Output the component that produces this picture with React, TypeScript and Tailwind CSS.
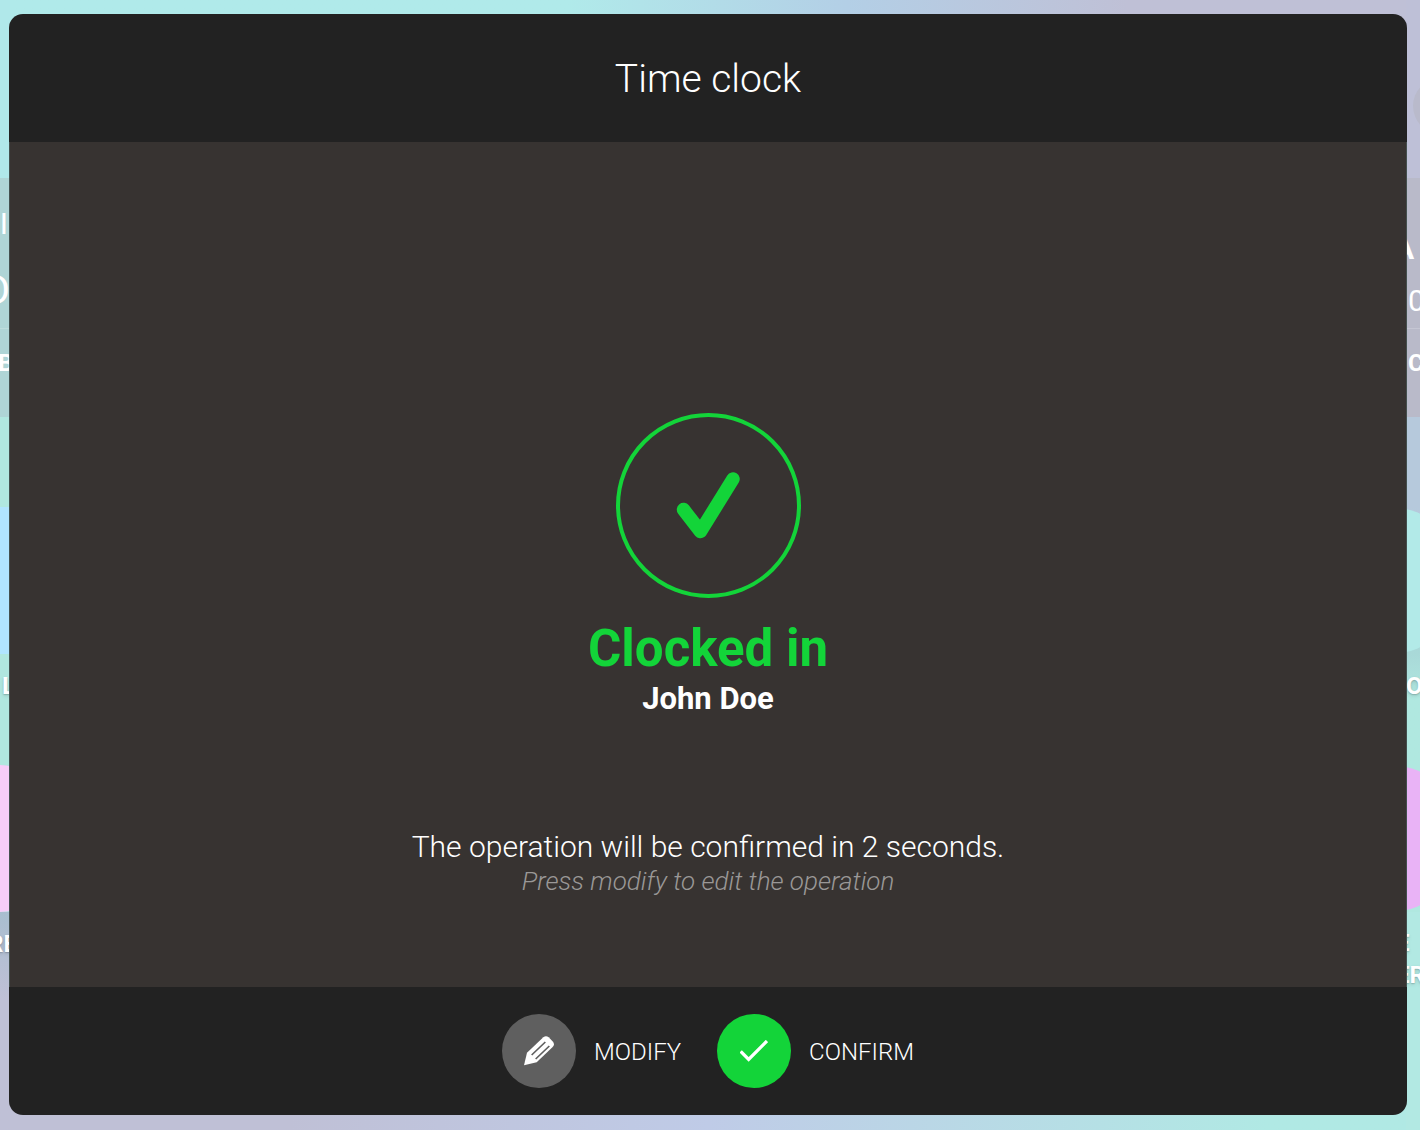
const PencilIcon = () => (
  <svg viewBox="0 0 90 90" className="w-[30px] h-[30px]" fill="none" aria-hidden="true">
    <path
      d="M0 88 L9 50 L58 4 Q66 -3 74 4 L87 17 Q93 25 86 33 L38 79 Z"
      fill="#fff"
    />
    <path d="M23 57 L64 18 M35 69 L76 30" stroke="#5f5f5f" strokeWidth="5" />
  </svg>
);

const CheckIcon = () => (
  <svg viewBox="0 0 84 66" className="w-[28px] h-[22px]" fill="none" aria-hidden="true">
    <path d="M2 34 L26 58 L81 3" stroke="#fff" strokeWidth="10" />
  </svg>
);

const SuccessMark = () => (
  <div className="w-[185px] h-[185px] rounded-full border-4 border-[#13d439] flex items-center justify-center">
    <svg viewBox="0 0 64 68" className="w-[64px] h-[68px]" fill="none" aria-hidden="true">
      <path
        d="M7.5 37.5 L24.5 59.5 L57 7"
        stroke="#13d439"
        strokeWidth="13.5"
        strokeLinecap="round"
        strokeLinejoin="round"
      />
    </svg>
  </div>
);

const Backdrop = () => (
  <div className="absolute inset-0 flex justify-between overflow-hidden text-white" aria-hidden="true">
    <div className="w-[10px] shrink-0 flex flex-col bg-[#b0e8ea]">
      <div className="h-[178px]" />
      <div className="h-[239px] bg-[#afd5d6] flex flex-col items-end">
        <span className="mt-[26px] pr-[2px] text-[30px] leading-[40px]">I</span>
        <span className="mt-[25px] text-[40px] leading-[44px]">D</span>
        <span className="mt-[15px] w-full border-t border-[#bcdcdc]" />
        <span className="mt-[20px] -ml-[2px] text-[24px] leading-[28px] font-bold self-start">B</span>
      </div>
      <div className="h-[90px] bg-[#b0e8e0]" />
      <div className="h-[147px] bg-[#b0e5ff]" />
      <div className="h-[111px] bg-[#b0e7df] pt-[18px] pl-[2px]">
        <span className="text-[24px] leading-[28px] font-bold text-shadow-md">L</span>
      </div>
      <div className="h-[147px] bg-[#b0e0df]">
        <div className="h-full w-[147px] -ml-[75px] rounded-full bg-[#f6cdf8]" />
      </div>
      <div className="flex-1 bg-linear-to-b from-[#a8becf] to-[#bfc0d6] to-40% pt-[18px] flex flex-col items-start">
        <span className="-ml-[12px] text-[24px] leading-[28px] font-bold text-shadow-md">RE</span>
      </div>
    </div>
    <div className="flex-1 flex flex-col justify-between">
      <div className="h-[40px] bg-linear-to-r from-[#b0eaea] from-40% via-[#b3cfe6] via-60% to-[#bfc0d6] to-80%" />
      <div className="h-[40px] bg-linear-to-r from-[#bfc0d6] from-20% via-[#bfcbe7] via-50% to-[#b0e9e4] to-90%" />
    </div>
    <div className="w-[14px] shrink-0 flex flex-col bg-[#bec0d7]">
      <div className="h-[178px] pt-[78px] pl-[7px]">
        <div className="w-[56px] h-[56px] rounded-full bg-[#b9bacb]" />
      </div>
      <div className="h-[239px] bg-[#b9bac9] flex flex-col items-start">
        <span className="mt-[51px] text-[30px] leading-[40px] font-bold -ml-[12px]">A</span>
        <span className="mt-[12px] text-[30px] leading-[40px] pl-[2px]">0</span>
        <span className="mt-[7px] w-full border-t border-[#c5c6d3]" />
        <span className="mt-[20px] text-[24px] leading-[28px] font-bold pl-[2px]">C</span>
      </div>
      <div className="h-[90px] bg-[#b6c9dc]" />
      <div className="h-[147px] bg-linear-to-b from-[#b6c9dc] to-[#a9d9d8]">
        <div className="h-full w-[147px] -ml-[90px] rounded-full bg-[#b2eae8]" />
      </div>
      <div className="h-[111px] bg-linear-to-b from-[#a9d9d8] to-[#b0e8e0] to-40% pt-[18px]">
        <span className="text-[24px] leading-[28px] font-bold text-shadow-md">O</span>
      </div>
      <div className="h-[147px] bg-[#b0e8e0]">
        <div className="h-full w-[147px] -ml-[90px] rounded-full bg-[#e9b3f6]" />
      </div>
      <div className="flex-1 bg-[#b2e9e3] pt-[15px] flex flex-col items-start">
        <span className="text-[24px] leading-[32px] font-bold -ml-[10px] text-shadow-md">E</span>
        <span className="text-[24px] leading-[32px] font-bold -ml-[10px] text-shadow-md">ER</span>
      </div>
    </div>
  </div>
);

const App = () => {
  const seconds = 2;

  return (
    <div className="relative min-h-screen flex pt-[14px] pb-[15px] pl-[9px] pr-[13px] bg-[#b9cfe2] font-['Roboto','Liberation_Sans',sans-serif]">
      <Backdrop />

      <section
        role="dialog"
        aria-labelledby="dialog-title"
        className="relative flex-1 flex flex-col rounded-[14px] overflow-hidden bg-[#222222] text-white"
      >
        <header className="h-32 pt-[2px] flex items-center justify-center">
          <h1 id="dialog-title" className="text-[39px] leading-[48px] font-light">Time clock</h1>
        </header>

        <div className="flex-1 flex flex-col items-center justify-end pb-[90px] text-center bg-[#373331] border-x border-[#44504e]">
          <SuccessMark />
          <h2 className="mt-[21px] text-[51px] leading-[60px] font-bold text-[#13d439]">Clocked in</h2>
          <p className="text-[31px] leading-[40px] font-bold">John Doe</p>
          <p className="mt-[110px] text-[30px] leading-[36px] font-light">
            The operation will be confirmed in {seconds} seconds.
          </p>
          <p className="text-[26px] leading-[32px] font-light italic text-[#9a9897]">
            Press modify to edit the operation
          </p>
        </div>

        <footer className="h-32 flex items-center justify-center gap-9">
          <button type="button" className="flex items-center gap-[18px] text-[24px] font-light">
            <span className="w-[74px] h-[74px] rounded-full bg-[#5f5f5f] flex items-center justify-center">
              <PencilIcon />
            </span>
            <span className="pt-[2px]">MODIFY</span>
          </button>
          <button type="button" className="flex items-center gap-[18px] text-[24px] font-light">
            <span className="w-[74px] h-[74px] rounded-full bg-[#13d439] flex items-center justify-center">
              <CheckIcon />
            </span>
            <span className="pt-[2px]">CONFIRM</span>
          </button>
        </footer>
      </section>
    </div>
  );
};

export default App;
